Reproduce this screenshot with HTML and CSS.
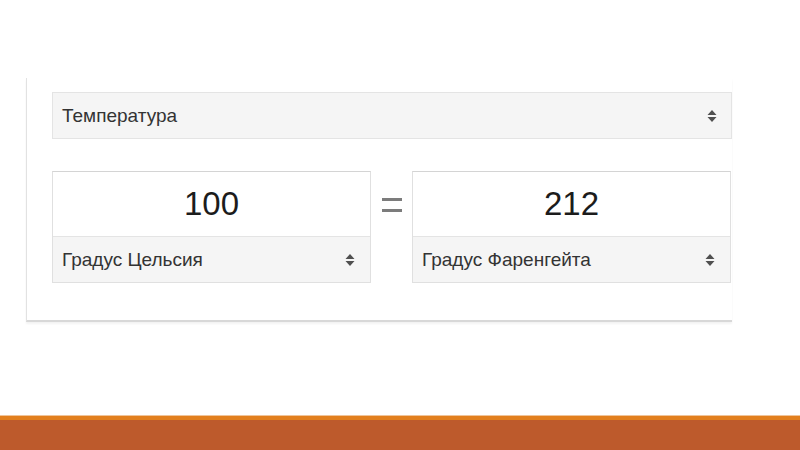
FILE: index.html
```html
<!DOCTYPE html>
<html lang="ru">
<head>
    <meta charset="UTF-8">
    <meta name="viewport" content="width=device-width, initial-scale=1.0">
    <title>Конвертер величин</title>
    <link rel="stylesheet" href="styles.css">
</head>
<body>
    <div class="card">
        <div class="select select-top">
            <span>Температура</span>
            <svg class="arrows" width="10" height="14" viewBox="0 0 10 14"><path d="M0.5 6 L5 1 L9.5 6 Z M0.5 8 L5 13 L9.5 8 Z" fill="#505050"/></svg>
        </div>

        <div class="row">
            <div class="unit">
                <div class="value">100</div>
                <div class="select">
                    <span>Градус Цельсия</span>
                    <svg class="arrows" width="10" height="14" viewBox="0 0 10 14"><path d="M0.5 6 L5 1 L9.5 6 Z M0.5 8 L5 13 L9.5 8 Z" fill="#505050"/></svg>
                </div>
            </div>

            <div class="equals">
                <span></span>
                <span></span>
            </div>

            <div class="unit">
                <div class="value">212</div>
                <div class="select">
                    <span>Градус Фаренгейта</span>
                    <svg class="arrows" width="10" height="14" viewBox="0 0 10 14"><path d="M0.5 6 L5 1 L9.5 6 Z M0.5 8 L5 13 L9.5 8 Z" fill="#505050"/></svg>
                </div>
            </div>
        </div>
    </div>

    <div class="footer">
        <div class="footer-line"></div>
        <div class="footer-bar"></div>
    </div>
</body>
</html>
```

FILE: styles.css
```css
body {
    font-family: "Liberation Sans", Arial, sans-serif;
    background-color: #fff;
    margin: 0;
    height: 450px;
    display: flex;
    flex-direction: column;
    overflow: hidden;
}
.card {
    margin: 78px 0 0 26px;
    width: 706px;
    padding: 14px 0 37px 25px;
    box-sizing: border-box;
    height: 244px;
    background: #fff;
    border-left: 1px solid #e2e2e2;
    border-bottom: 2px solid #d8d8d8;
    box-shadow: 0 2px 2px rgba(0, 0, 0, 0.05);
}
.select {
    display: flex;
    align-items: center;
    justify-content: space-between;
    background-color: #f5f5f5;
    color: #333;
    font-size: 19px;
    padding: 0 14px 0 9px;
    box-sizing: border-box;
}
.select-top {
    width: 680px;
    height: 47px;
    border: 1px solid #e4e4e4;
}
.arrows {
    display: block;
}
.row {
    display: flex;
    align-items: flex-start;
    margin-top: 32px;
}
.unit {
    width: 319px;
    height: 112px;
    border: 1px solid #e0e0e0;
    border-top-color: #d4d4d4;
    box-sizing: border-box;
    display: flex;
    flex-direction: column;
}
.value {
    height: 64px;
    display: flex;
    align-items: center;
    justify-content: center;
    font-size: 33px;
    color: #1c1c1c;
    border-bottom: 1px solid #e4e4e4;
    background: #fff;
}
.unit .select {
    flex: 1;
    padding-right: 15px;
}
.equals {
    width: 41px;
    padding-top: 27px;
    display: flex;
    flex-direction: column;
    align-items: center;
    gap: 8px;
}
.equals span {
    display: block;
    width: 20px;
    height: 3px;
    background: #7c7c7c;
}
.footer {
    margin-top: auto;
}
.footer-line {
    height: 1px;
    background: #f0c49a;
}
.footer-bar {
    height: 34px;
    background: #bd5a2c;
    border-top: 4px solid #e27f1e;
    box-sizing: border-box;
}
```
